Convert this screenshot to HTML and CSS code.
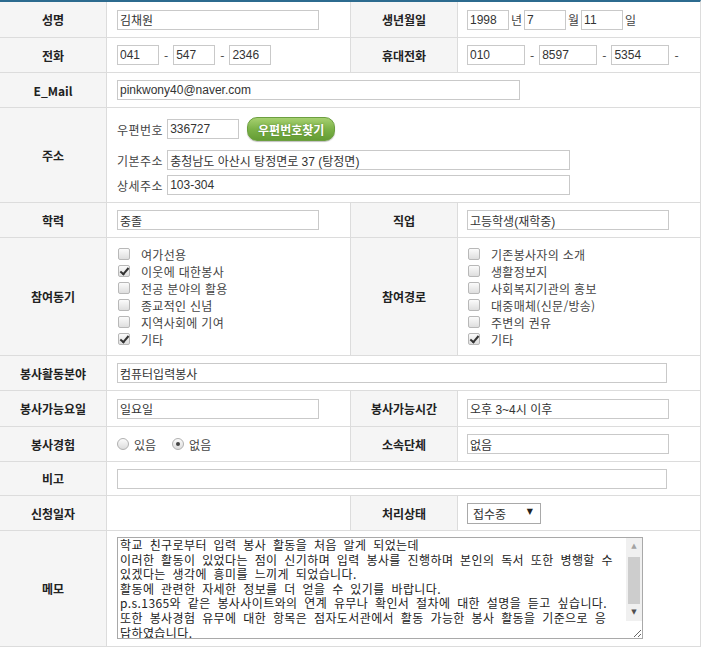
FILE: index.html
```html
<!DOCTYPE html>
<html lang="ko">
<head>
    <meta charset="UTF-8">
    <meta name="viewport" content="width=device-width, initial-scale=1.0">
    <title>봉사자 신청서</title>
    <link rel="stylesheet" href="styles.css">
</head>
<body>
    <div class="form">
        <div class="row h36">
            <div class="th">성명</div>
            <div class="td"><input class="txt w202" type="text" value="김채원"></div>
            <div class="th">생년월일</div>
            <div class="td td-r">
                <input class="txt w42" type="text" value="1998"><span class="unit">년</span>
                <input class="txt w42" type="text" value="7"><span class="unit">월</span>
                <input class="txt w42" type="text" value="11"><span class="unit">일</span>
            </div>
        </div>
        <div class="row h35">
            <div class="th">전화</div>
            <div class="td">
                <input class="txt w42" type="text" value="041"><span class="dash">-</span>
                <input class="txt w42" type="text" value="547"><span class="dash">-</span>
                <input class="txt w42" type="text" value="2346">
            </div>
            <div class="th">휴대전화</div>
            <div class="td td-r">
                <input class="txt w58" type="text" value="010"><span class="dash">-</span>
                <input class="txt w58" type="text" value="8597"><span class="dash">-</span>
                <input class="txt w58" type="text" value="5354"><span class="dash">-</span>
            </div>
        </div>
        <div class="row wide h35">
            <div class="th">E_Mail</div>
            <div class="td"><input class="txt w403" type="text" value="pinkwony40@naver.com"></div>
        </div>
        <div class="row wide h95">
            <div class="th">주소</div>
            <div class="td addr">
                <div class="addr-line first">
                    <span class="addr-label">우편번호</span>
                    <input class="txt w72" type="text" value="336727">
                    <button class="btn-zip" type="button">우편번호찾기</button>
                </div>
                <div class="addr-line second">
                    <span class="addr-label">기본주소</span>
                    <input class="txt w403" type="text" value="충청남도 아산시 탕정면로 37 (탕정면)">
                </div>
                <div class="addr-line third">
                    <span class="addr-label">상세주소</span>
                    <input class="txt w403" type="text" value="103-304">
                </div>
            </div>
        </div>
        <div class="row h35">
            <div class="th">학력</div>
            <div class="td"><input class="txt w202" type="text" value="중졸"></div>
            <div class="th">직업</div>
            <div class="td td-r"><input class="txt w202" type="text" value="고등학생(재학중)"></div>
        </div>
        <div class="row h118">
            <div class="th">참여동기</div>
            <div class="td">
                <ul class="checks">
                    <li><input class="chk" type="checkbox">여가선용</li>
                    <li><input class="chk" type="checkbox" checked>이웃에 대한봉사</li>
                    <li><input class="chk" type="checkbox">전공 분야의 활용</li>
                    <li><input class="chk" type="checkbox">종교적인 신념</li>
                    <li><input class="chk" type="checkbox">지역사회에 기여</li>
                    <li><input class="chk" type="checkbox" checked>기타</li>
                </ul>
            </div>
            <div class="th">참여경로</div>
            <div class="td td-r">
                <ul class="checks">
                    <li><input class="chk" type="checkbox">기존봉사자의 소개</li>
                    <li><input class="chk" type="checkbox">생활정보지</li>
                    <li><input class="chk" type="checkbox">사회복지기관의 홍보</li>
                    <li><input class="chk" type="checkbox">대중매체(신문/방송)</li>
                    <li><input class="chk" type="checkbox">주변의 권유</li>
                    <li><input class="chk" type="checkbox" checked>기타</li>
                </ul>
            </div>
        </div>
        <div class="row wide h35">
            <div class="th">봉사활동분야</div>
            <div class="td"><input class="txt w550" type="text" value="컴퓨터입력봉사"></div>
        </div>
        <div class="row h36">
            <div class="th">봉사가능요일</div>
            <div class="td"><input class="txt w202" type="text" value="일요일"></div>
            <div class="th">봉사가능시간</div>
            <div class="td td-r"><input class="txt w202" type="text" value="오후 3~4시 이후"></div>
        </div>
        <div class="row h35">
            <div class="th">봉사경험</div>
            <div class="td">
                <label class="radio-item"><input class="rdo" type="radio" name="exp">있음</label>
                <label class="radio-item"><input class="rdo" type="radio" name="exp" checked>없음</label>
            </div>
            <div class="th">소속단체</div>
            <div class="td td-r"><input class="txt w202" type="text" value="없음"></div>
        </div>
        <div class="row wide h34">
            <div class="th">비고</div>
            <div class="td"><input class="txt w550" type="text" value=""></div>
        </div>
        <div class="row h35">
            <div class="th">신청일자</div>
            <div class="td"></div>
            <div class="th">처리상태</div>
            <div class="td td-r">
                <span class="select-wrap"><select class="status"><option>접수중</option><option>처리완료</option></select></span>
            </div>
        </div>
        <div class="row wide h116">
            <div class="th">메모</div>
            <div class="td memo-cell">
                <div class="memo-wrap">
<textarea class="memo">학교 친구로부터 입력 봉사 활동을 처음 알게 되었는데
이러한 활동이 있었다는 점이 신기하며 입력 봉사를 진행하며 본인의 독서 또한 병행할 수
있겠다는 생각에 흥미를 느끼게 되었습니다.
활동에 관련한 자세한 정보를 더 얻을 수 있기를 바랍니다.
p.s.1365와 같은 봉사사이트와의 연계 유무나 확인서 절차에 대한 설명을 듣고 싶습니다.
또한 봉사경험 유무에 대한 항목은 점자도서관에서 활동 가능한 봉사 활동을 기준으로 응
답하였습니다.</textarea>
                    <div class="fake-scroll">
                        <span class="arrow up">▲</span>
                        <span class="thumb"></span>
                        <span class="arrow down">▼</span>
                    </div>
                </div>
            </div>
        </div>
    </div>
</body>
</html>
```

FILE: styles.css
```css
body {
    margin: 0;
    background: #fff;
    font-family: "Noto Sans CJK KR", sans-serif;
    font-size: 12px;
    color: #333;
}

.form {
    width: 701px;
    border-top: 2px solid #2c6b8f;
    border-right: 1px solid #dcdcdc;
    box-sizing: border-box;
}

.row {
    display: grid;
    grid-template-columns: 107px 244px 107px 1fr;
    border-bottom: 1px solid #dcdcdc;
    box-sizing: border-box;
}

.row.wide {
    grid-template-columns: 107px 1fr;
}

.h34 { height: 34px; }
.h35 { height: 35px; }
.h36 { height: 36px; }
.h95 { height: 95px; }
.h116 { height: 116px; }
.h118 { height: 118px; }

.th {
    display: flex;
    align-items: center;
    justify-content: center;
    background: #f5f5f5;
    border-right: 1px solid #dcdcdc;
    font-weight: bold;
    color: #222;
    font-size: 12px;
}

.td {
    display: flex;
    align-items: center;
    padding-left: 10px;
    border-right: 1px solid #dcdcdc;
}

.row.wide .td,
.td.td-r {
    border-right: none;
}

.td.td-r {
    padding-left: 9px;
}

.txt {
    height: 20px;
    margin: 0;
    padding: 0 2px;
    border: 1px solid #c9c9c9;
    box-sizing: border-box;
    font-family: "Liberation Sans", "Noto Sans CJK KR", sans-serif;
    font-size: 12px;
    color: #333;
    background: #fff;
}

.w42 { width: 42px; }
.w58 { width: 58px; }
.w72 { width: 72px; }
.w202 { width: 202px; }
.w403 { width: 403px; }
.w550 { width: 550px; }

.unit {
    margin: 0 2px;
    color: #444;
}

.dash {
    margin: 0 5px 0 5px;
    color: #444;
}

/* 주소 */
.td.addr {
    flex-direction: column;
    align-items: flex-start;
    justify-content: flex-start;
    padding-top: 9px;
}

.addr-line {
    display: flex;
    align-items: center;
}

.addr-line.first { height: 24px; }
.addr-line.second { margin-top: 9px; }
.addr-line.third { margin-top: 5px; }

.addr-label {
    margin-right: 4px;
    letter-spacing: 0.5px;
    color: #444;
}

.btn-zip {
    margin-left: 8px;
    width: 88px;
    height: 24px;
    padding: 0;
    border: 1px solid #6c9f3f;
    border-radius: 10px;
    background: linear-gradient(#a6d070, #7cb248 50%, #649c34);
    box-shadow: 0 1px 1px rgba(0, 0, 0, 0.25);
    color: #fff;
    font-family: "Noto Sans CJK KR", sans-serif;
    font-size: 12px;
    font-weight: bold;
    text-shadow: 0 0 2px rgba(60, 100, 20, 0.6);
    cursor: pointer;
}

/* 체크박스 */
.checks {
    list-style: none;
    margin: 0;
    padding: 0 0 0 1px;
}

.checks li {
    display: flex;
    align-items: center;
    height: 17px;
    color: #444;
    letter-spacing: 0.3px;
}

.chk {
    appearance: none;
    position: relative;
    width: 12px;
    height: 12px;
    margin: 0 11px 0 0;
    border: 1px solid #b8b8b8;
    border-radius: 2px;
    background: linear-gradient(#fbfbfb, #dedede);
}

.chk:checked::after {
    content: "";
    position: absolute;
    left: 3px;
    top: 0;
    width: 3px;
    height: 7px;
    border: solid #333;
    border-width: 0 2px 2px 0;
    transform: rotate(40deg);
}

/* 라디오 */
.radio-item {
    display: flex;
    align-items: center;
    margin-right: 16px;
    color: #444;
}

.rdo {
    appearance: none;
    position: relative;
    width: 12px;
    height: 12px;
    margin: 0 5px 0 0;
    border: 1px solid #b0b0b0;
    border-radius: 50%;
    background: linear-gradient(#fbfbfb, #dcdcdc);
}

.rdo:checked::after {
    content: "";
    position: absolute;
    left: 3px;
    top: 3px;
    width: 4px;
    height: 4px;
    border-radius: 50%;
    background: #444;
}

/* 처리상태 */
.select-wrap {
    position: relative;
    display: inline-block;
}

.select-wrap::after {
    content: "▼";
    position: absolute;
    right: 8px;
    top: 4px;
    font-family: "DejaVu Sans", sans-serif;
    font-size: 8px;
    color: #222;
    pointer-events: none;
}

.status {
    appearance: none;
    width: 74px;
    height: 21px;
    margin: 0;
    padding: 0 0 0 5px;
    border: 1px solid #a9a9a9;
    border-radius: 0;
    background: #fff;
    font-family: "Noto Sans CJK KR", sans-serif;
    font-size: 12px;
    color: #333;
}

/* 메모 */
.td.memo-cell {
    align-items: flex-start;
    padding-top: 6px;
}

.memo-wrap {
    position: relative;
    width: 526px;
    height: 102px;
}

.memo {
    display: block;
    width: 526px;
    height: 102px;
    margin: 0;
    padding: 0 19px 0 2px;
    border: 1px solid #a9a9a9;
    box-sizing: border-box;
    font-family: "Noto Sans CJK KR", sans-serif;
    font-size: 12px;
    line-height: 14.6px;
    letter-spacing: 0.4px;
    word-spacing: 3px;
    color: #222;
    white-space: pre;
    overflow: auto;
    scrollbar-width: none;
}

.memo::-webkit-scrollbar {
    display: none;
}

.fake-scroll {
    position: absolute;
    top: 1px;
    right: 1px;
    bottom: 18px;
    width: 16px;
    display: flex;
    flex-direction: column;
    align-items: center;
    background: #f0f0f0;
    pointer-events: none;
}

.fake-scroll .arrow {
    height: 17px;
    line-height: 17px;
    font-family: "DejaVu Sans", sans-serif;
    font-size: 7px;
}

.fake-scroll .arrow.up {
    color: #a3a3a3;
}

.fake-scroll .arrow.down {
    margin-top: auto;
    color: #505050;
}

.fake-scroll .thumb {
    width: 12px;
    height: 52px;
    margin-top: 2px;
    background: #cdcdcd;
}
```
